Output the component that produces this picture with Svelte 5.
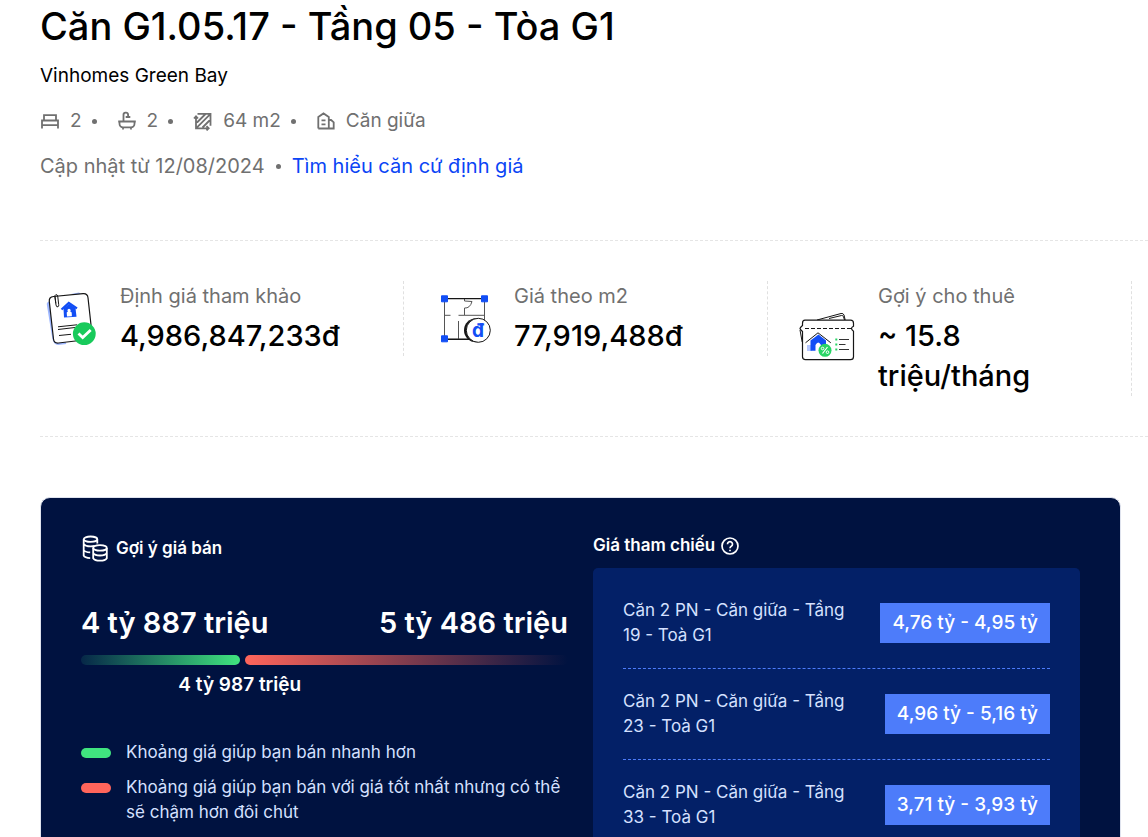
<script lang="ts">
  interface Reference {
    name: string;
    range: string;
  }

  // where the reference price sits on the range bar
  const midPercent = 32.6;

  const references: Reference[] = [
    { name: 'Căn 2 PN - Căn giữa - Tầng 19 - Toà G1', range: '4,76 tỷ - 4,95 tỷ' },
    { name: 'Căn 2 PN - Căn giữa - Tầng 23 - Toà G1', range: '4,96 tỷ - 5,16 tỷ' },
    { name: 'Căn 2 PN - Căn giữa - Tầng 33 - Toà G1', range: '3,71 tỷ - 3,93 tỷ' },
  ];
</script>

<main class="page">
  <header class="intro">
    <h1>Căn G1.05.17 - Tầng 05 - Tòa G1</h1>
    <p class="project">Vinhomes Green Bay</p>
    <ul class="specs">
      <li>
        <svg class="spec-icon" viewBox="0 0 20 20" aria-hidden="true">
          <path d="M4 9V4.200h12V9M2 17.500V9.500h16v8M2 14.200h16M4 9.500h12" />
        </svg>
        2
      </li>
      <li>
        <svg class="spec-icon" viewBox="0 0 20 20" aria-hidden="true">
          <path d="M1.200 10.500h17.600M2.500 10.500v2.200a3.600 3.600 0 0 0 3.600 3.600h7.800a3.600 3.600 0 0 0 3.600-3.600v-2.200M6 16.500v2M14 16.500v2M6.500 10.200V4.200a2.200 2.200 0 0 1 4.600-.5v2M8.700 6h4.600" />
        </svg>
        2
      </li>
      <li>
        <svg class="spec-icon" viewBox="0 0 20 20" aria-hidden="true">
          <path d="M4.500 2.800h13v12M3 5.500v11.800h12.500M1 7.500l2-2.200 2 2.200M13.500 15.200l2.200 2.100-2.200 2.100M3.500 16.800l14-14M4 11.500l8.500-8.500M9.500 16.500l8-8" />
        </svg>
        64 m2
      </li>
      <li>
        <svg class="spec-icon" viewBox="0 0 20 20" aria-hidden="true">
          <path d="M2.300 17.500V6l5.200-3.600L12.800 6v11.500M12.800 9h2.300l2.600 2.300v6.200H2.300M5.500 9.300h4M5.500 13.300h4" />
        </svg>
        Căn giữa
      </li>
    </ul>
    <p class="updated">
      Cập nhật từ 12/08/2024
      <span class="dot"></span>
      <a href="#dinh-gia">Tìm hiểu căn cứ định giá</a>
    </p>
  </header>

  <section class="metrics">
    <div class="metric">
      <svg class="metric-icon" viewBox="0 0 60 60" aria-hidden="true">
        <path d="M10 12l-2 1q-1.500.5-1.200 2.500l5.500 34q1 6 6 6.500l8-1M31 5l8-1.500 4 3" fill="#9db6ff" />
        <path d="M13.500 7.500L43 4.700q4.500-.4 5 4L52 45q.5 5-4 5.500L18.500 54q-4.500.5-5-4L9.300 12.500q-.5-4.500 4.200-5z" fill="#fff" stroke="#161616" stroke-width="1.200" />
        <path d="M15 7.500l1 8.500q.5 2.500 2 1.800 1-.6.700-2.300l-1-8.500q-.5-1.800-2-1.200-1 .5-.8 2l.9 6.500" fill="none" stroke="#161616" />
        <path d="M23.500 19.500l5.500-4.500 6.500 4 1 8.700-12.500.9z" fill="#124ef5" />
        <path d="M21.500 20.500l7.300-6.500 8.200 5.300" fill="none" stroke="#124ef5" stroke-width="2.200" />
        <path d="M27 27.500l-.3-4 1.200-1a1.600 1.600 0 1 1 2.400-.1l1.400 1 .2 3.800z" fill="#fff" />
        <path d="M18 37.800l19-2M18 40.500l17-2M19 46.500l12-1.200" stroke="#161616" />
        <circle cx="44.300" cy="44.700" r="11.400" fill="#18ca5b" />
        <path d="M38.500 44.500l4.200 4 8-7.500" fill="none" stroke="#fff" stroke-width="2.800" />
      </svg>
      <div>
        <h2>Định giá tham khảo</h2>
        <p class="value">4,986,847,233đ</p>
      </div>
    </div>
    <div class="metric">
      <svg class="metric-icon" viewBox="0 0 60 60" aria-hidden="true">
        <path d="M10.500 10v40H38M10.500 26.300h6M24.500 26.300h26M24.500 32v18M50.500 10v22M30.500 26V19q5.500.5 7.500-6.500l-7.500-.5v-2" fill="none" stroke="#555" />
        <path d="M10 9.700h41M10 50.300h28" stroke="#161616" stroke-width="1.200" />
        <circle cx="42" cy="41.300" r="12" fill="#161616" />
        <circle cx="44.300" cy="41.300" r="12" fill="#fff" stroke="#161616" />
        <text x="44" y="48" class="coin">đ</text>
        <path d="M7.500 6.800h6v6h-6zM47.500 6.800h6v6h-6zM7.500 46.800h6v6h-6z" fill="#124ef5" stroke="#124ef5" stroke-linejoin="round" />
      </svg>
      <div>
        <h2>Giá theo m2</h2>
        <p class="value">77,919,488đ</p>
      </div>
    </div>
    <div class="metric">
      <svg class="metric-icon" viewBox="0 0 60 60" aria-hidden="true">
        <path d="M19 11l24-6.500q2.300-.5 3 1.500l1.200 5M31 9.500l12.500-3q1.500-.3 2 1.300l1 3.200" fill="none" stroke="#161616" />
        <path d="M2 21l2.200 12" stroke="#161616" />
        <path d="M7 11.200h45.500q3 0 3 3v3q-4 2 0 5v25.500q0 3-3 3H7.500q-3 0-3-3V22.500l-2-2q-1-1 0-2l2-2v-2.300q0-3 2.500-3z" fill="#fff" stroke="#161616" stroke-width="1.200" />
        <path d="M7 19.500h46" stroke="#161616" stroke-width="1.200" stroke-dasharray="4 2" />
        <path d="M9 36h5v6H9z" fill="#b6c8ff" />
        <path d="M12.500 31.500l8-6 7.500 6v10.300H12.500z" fill="#124ef5" />
        <path d="M17.500 42v-6q2.700-5 5.500 0v6z" fill="#fff" />
        <path d="M7.500 33.800l12.500-10 12.800 10" fill="none" stroke="#161616" />
        <circle cx="27" cy="41.300" r="6.500" fill="#28d565" />
        <path d="M24.500 44.500l5-6.500" stroke="#fff" stroke-width="1.200" />
        <circle cx="24.600" cy="39.500" r="1.300" fill="none" stroke="#fff" />
        <circle cx="29.500" cy="43.200" r="1.300" fill="none" stroke="#fff" />
        <path d="M41 30.500h10M41 35.500h6.500M41 40.500h10" stroke="#333" stroke-width="1.200" />
        <path d="M37.300 30.500h2M37.300 35.500h2M37.300 40.500h2" stroke="#28d565" stroke-width="2.200" />
      </svg>
      <div>
        <h2>Gợi ý cho thuê</h2>
        <p class="value">~ 15.8 triệu/tháng</p>
      </div>
    </div>
  </section>

  <section class="card" id="dinh-gia">
    <div class="suggestion">
      <h3 class="card-title">
        <svg class="coins" viewBox="0 0 27 27" aria-hidden="true">
          <ellipse cx="9.500" cy="4.200" rx="6.800" ry="2.700" />
          <path d="M2.700 4.200v16.500q1 2.200 6.500 2.400M16.300 4.200v4.300M2.700 9q1.500 2.400 6.800 2.400 2.600 0 4.200-.5M2.700 15q1 2.200 6.500 2.400" />
          <ellipse cx="19" cy="12.900" rx="6.800" ry="2.700" />
          <path d="M12.200 12.900v10.300q1.500 2.500 6.800 2.500t6.800-2.500V12.900M12.200 18q1.500 2.500 6.800 2.500t6.800-2.500" />
        </svg>
        Gợi ý giá bán
      </h3>
      <div class="limits">
        <span>4 tỷ 887 triệu</span>
        <span>5 tỷ 486 triệu</span>
      </div>
      <div class="range">
        <div class="fast" style="width: {midPercent}%"></div>
        <div class="slow"></div>
      </div>
      <div class="mid" style="width: {midPercent * 2}%">4 tỷ 987 triệu</div>
      <ul class="legend">
        <li><span class="swatch green"></span>Khoảng giá giúp bạn bán nhanh hơn</li>
        <li><span class="swatch red"></span>Khoảng giá giúp bạn bán với giá tốt nhất nhưng có thể sẽ chậm hơn đôi chút</li>
      </ul>
    </div>

    <div class="compare">
      <h3>
        Giá tham chiếu
        <button type="button" class="help" aria-label="Giá tham chiếu">
          <svg viewBox="0 0 18 18" aria-hidden="true">
            <circle cx="9" cy="9" r="8" />
            <path d="M6.500 7.200a2.500 2.500 0 1 1 3.800 2.100q-1.300.8-1.300 1.900M9 12.700v1.600" />
          </svg>
        </button>
      </h3>
      <ul class="references">
        {#each references as item}
          <li>
            <span class="name">{item.name}</span>
            <span class="badge">{item.range}</span>
          </li>
        {/each}
      </ul>
    </div>
  </section>
</main>

<style>
  :global(body) {
    margin: 0;
    background: #fff;
    color: #000;
    font-family: Inter, "Noto Sans", sans-serif;
  }

  h1,
  h2,
  h3,
  p,
  ul {
    margin: 0;
    padding: 0;
    font-weight: 400;
    list-style: none;
  }

  .page {
    display: flex;
    flex-direction: column;
    height: 100vh;
    overflow: hidden;
    padding-left: 40px;
    box-sizing: border-box;
  }

  .intro {
    padding-bottom: 59px;
    border-bottom: 1px dashed #e5e5e5;
  }

  h1 {
    font-size: 38px;
    line-height: 52px;
    font-weight: 500;
  }

  .project {
    margin-top: 9px;
    font-size: 19px;
    line-height: 30px;
  }

  .specs {
    display: flex;
    margin-top: 15px;
    font-size: 19px;
    line-height: 30px;
    color: #707070;
  }

  .specs li {
    display: flex;
    align-items: center;
    gap: 10px;
  }

  .specs li:not(:last-child)::after,
  .dot {
    content: "";
    width: 5px;
    height: 5px;
    border-radius: 50%;
    background: #707070;
  }

  .specs li:not(:last-child) {
    margin-right: 20px;
  }

  .spec-icon {
    width: 20px;
    height: 20px;
    fill: none;
    stroke: #707070;
    stroke-width: 1.8;
  }

  .updated {
    display: flex;
    align-items: center;
    gap: 11px;
    margin-top: 15px;
    font-size: 20px;
    line-height: 30px;
    color: #707070;
  }

  a {
    color: #0b45f5;
    text-decoration: none;
  }

  .metrics {
    display: grid;
    grid-template-columns: repeat(3, minmax(0, 1fr));
    align-items: start;
    padding: 40px 16px 40px 0;
    border-bottom: 1px dashed #e5e5e5;
  }

  .metric {
    display: flex;
    align-items: center;
    gap: 20px;
    padding: 0 30px;
    border-right: 1px dashed #e0e0e0;
  }

  .metric:first-child {
    padding-left: 0;
  }

  .metric-icon {
    flex: none;
    width: 60px;
    height: 60px;
  }

  .coin {
    font-size: 19px;
    font-weight: 700;
    text-anchor: middle;
    fill: #124ef5;
  }

  h2 {
    font-size: 20px;
    line-height: 30px;
    color: #707070;
  }

  .value {
    margin-top: 5px;
    font-size: 29px;
    line-height: 40px;
    font-weight: 500;
  }

  .card {
    flex: none;
    display: grid;
    grid-template-columns: repeat(2, minmax(0, 1fr));
    gap: 25px;
    margin: 60px 27px 40px 0;
    padding: 35px 40px;
    border: 1px solid #dfe3ee;
    border-radius: 10px;
    background: #001240;
    color: #fff;
  }

  h3 {
    display: flex;
    align-items: center;
    gap: 6px;
    font-size: 17px;
    line-height: 25px;
    font-weight: 600;
  }

  .card-title {
    gap: 8px;
    line-height: 30px;
  }

  .coins {
    width: 27px;
    height: 27px;
    fill: none;
    stroke: #fff;
    stroke-width: 1.8;
  }

  .limits {
    display: flex;
    justify-content: space-between;
    margin-top: 40px;
    font-size: 29px;
    line-height: 40px;
    font-weight: 600;
  }

  .range {
    display: flex;
    gap: 5px;
    margin-top: 12px;
  }

  .fast,
  .slow {
    height: 10px;
    border-radius: 5px;
  }

  .fast {
    background: linear-gradient(90deg, #062748, #40e47f);
  }

  .slow {
    flex: 1;
    background: linear-gradient(90deg, #ff655b, #001240);
  }

  .mid {
    margin-top: 5px;
    font-size: 19px;
    line-height: 30px;
    font-weight: 600;
    text-align: center;
  }

  .legend {
    display: grid;
    gap: 10px;
    margin-top: 40px;
    font-size: 17px;
    line-height: 25px;
    color: #d5e0ff;
  }

  .legend li {
    display: flex;
    gap: 15px;
  }

  .swatch {
    flex: none;
    width: 30px;
    height: 10px;
    margin-top: 8px;
    border-radius: 5px;
  }

  .green {
    background: #40e47f;
  }

  .red {
    background: #ff655b;
  }

  .help {
    display: flex;
    padding: 0;
    border: none;
    background: none;
    cursor: pointer;
  }

  .help svg {
    width: 18px;
    height: 18px;
    fill: none;
    stroke: #fff;
    stroke-width: 1.7;
  }

  .references {
    margin-top: 10px;
    padding: 10px 30px;
    border-radius: 5px;
    background: #032067;
  }

  .references li {
    display: flex;
    align-items: center;
    justify-content: space-between;
    padding: 20px 0;
  }

  .references li:not(:last-child) {
    border-bottom: 1px dashed #4d7cfa;
  }

  .name {
    width: 55%;
    font-size: 17px;
    line-height: 25px;
    color: #d5e0ff;
  }

  .badge {
    padding: 0 12px;
    background: #4d7cfa;
    font-size: 19px;
    line-height: 40px;
    font-weight: 500;
    white-space: nowrap;
  }
</style>
